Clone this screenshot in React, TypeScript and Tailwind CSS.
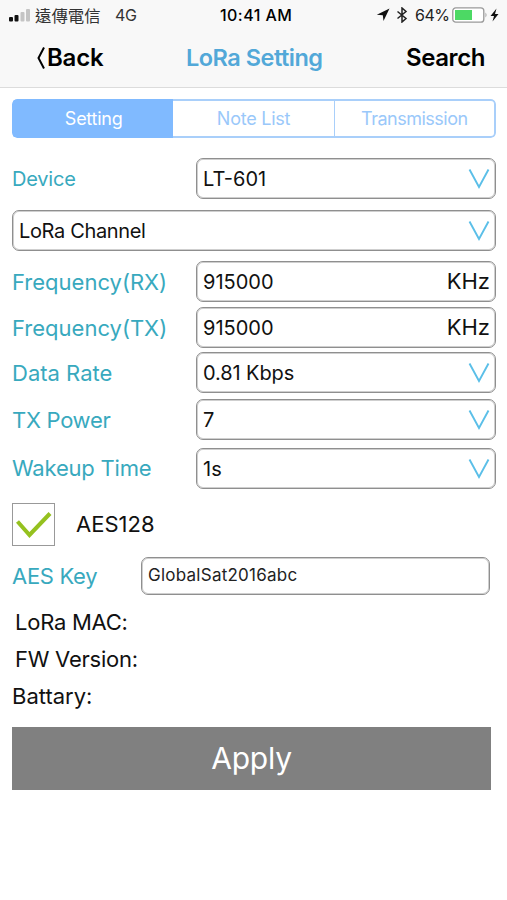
import React, { useState } from 'react';
import clsx from 'clsx';

const TABS = [
  { name: 'Setting', tracking: 'tracking-[-0.25px]' },
  { name: 'Note List', tracking: 'tracking-[-0.25px]' },
  { name: 'Transmission', tracking: 'tracking-[-0.5px]' },
];

function StatusBar() {
  return (
    <div className="flex items-center h-[30px] text-black">
      <svg width="24" height="14" viewBox="0 0 24 14" className="ml-2 shrink-0">
        <rect x="1" y="9" width="4" height="4.5" rx="1" fill="#111" />
        <rect x="6.5" y="7" width="4" height="6.5" rx="1" fill="#111" />
        <rect x="12.5" y="4" width="4" height="9.5" rx="1" fill="#c4c4c4" />
        <rect x="18" y="1" width="4" height="12.5" rx="1" fill="#c4c4c4" />
      </svg>
      <span className="ml-[3px] w-[80px] text-[16.4px] leading-[30px] font-['Noto_Sans_CJK_TC',sans-serif] text-[#333] whitespace-nowrap">遠傳電信</span>
      <span className="w-[105px] text-[16px] tracking-[-0.3px] text-[#333]">4G</span>
      <span className="w-[156px] text-[16px] font-medium tracking-[0.45px] whitespace-nowrap">10:41 AM</span>
      <svg width="14" height="14" viewBox="0 0 14 14" className="shrink-0">
        <path d="M13.5 0.5L0.8 6.8L6.8 7.2L7.5 13Z" fill="#111" />
      </svg>
      <svg width="12" height="16" viewBox="0 0 12 16" className="ml-[6px] shrink-0" fill="none" stroke="#222" strokeWidth="1.5">
        <path d="M1.5 4.5L10 11.5L6 15V1L10 4.5L1.5 11.5" />
      </svg>
      <span className="ml-[7px] w-[37px] text-[16px] tracking-[-0.5px] text-[#222]">64%</span>
      <svg width="50" height="16" viewBox="0 0 50 16" className="shrink-0">
        <rect x="0.8" y="0.8" width="31" height="14.4" rx="3" fill="#fff" stroke="#999" strokeWidth="1.3" />
        <rect x="3" y="3" width="17" height="10" fill="#4cd964" />
        <path d="M33.5 5.5Q35.5 8 33.5 10.5Z" fill="#999" />
        <path d="M44.5 1.5L38.5 9H42L40.5 14.5L46.5 7H43Z" fill="#111" />
      </svg>
    </div>
  );
}

function Field({ value, unit, arrow, className }: { value: string; unit?: string; arrow?: boolean; className?: string }) {
  return (
    <div className={clsx('flex items-center justify-between border border-[#8f8f8f] rounded-[7px] shadow-[inset_0_0_0_1px_#cfcfcf] text-[#111]', className)}>
      <span className="text-[20px] whitespace-nowrap">{value}</span>
      {unit && <span className="text-[22px]">{unit}</span>}
      {arrow && (
        <svg width="22" height="21" viewBox="0 0 22 21" fill="none" stroke="#5bbfe8" strokeWidth="1.9" className="shrink-0">
          <path d="M1.5 1.5L11 19L20.5 1.5" />
        </svg>
      )}
    </div>
  );
}

function Row({ label, labelClass = 'text-[22px]', children, className }: { label: string; labelClass?: string; children: React.ReactNode; className?: string }) {
  return (
    <div className={clsx('flex items-center h-[41px]', className)}>
      <span className={clsx('w-[184px] shrink-0 text-[#38a9be] whitespace-nowrap', labelClass)}>{label}</span>
      {children}
    </div>
  );
}

const box = 'w-[300px] h-[41px] pl-[6px] pr-[5px]';

export default function App() {
  const [tab, setTab] = useState(0);
  const [aes, setAes] = useState(true);

  return (
    <div className="w-[507px] h-[900px] overflow-hidden bg-white font-['Inter',sans-serif]">
      <header className="h-[88px] bg-[#f8f8f8] border-b border-[#dcdcdc]">
        <StatusBar />
        <nav className="flex items-center h-[55px] text-[24px] font-semibold">
          <button className="flex items-center w-[186px] pl-[36px] text-black">
            <svg width="11" height="24" viewBox="0 0 11 24" fill="none" stroke="#000" strokeWidth="2">
              <path d="M8 1.5L2.5 12L8 22.5" />
            </svg>
            <span className="tracking-[-0.2px]">Back</span>
          </button>
          <h1 className="w-[220px] text-[23.5px] tracking-[-0.5px] text-[#52a8d8] whitespace-nowrap">LoRa Setting</h1>
          <button className="tracking-[-0.4px] text-black">Search</button>
        </nav>
      </header>

      <main className="pt-[11px] pl-3">
        <div className="grid grid-cols-3 w-[484px] h-[39px] rounded-[5px] overflow-hidden">
          {TABS.map((t, i) => (
            <button
              key={t.name}
              onClick={() => setTab(i)}
              className={clsx(
                'border-y-2 text-[18px]',
                t.tracking,
                i === 0 && 'rounded-l-[5px] border-l-2',
                i === 1 && 'border-r',
                i === 2 && 'rounded-r-[5px] border-r-2',
                tab === i ? 'bg-[#80baff] border-[#80baff] text-white' : 'border-[#a9cffa] text-[#9ac8fa]'
              )}
            >
              {t.name}
            </button>
          ))}
        </div>

        <Row label="Device" labelClass="text-[20px] tracking-[-0.2px] pt-px" className="mt-[20px]">
          <Field value="LT-601" arrow className={box} />
        </Row>
        <Field value="LoRa Channel" arrow className="mt-[11px] w-[484px] h-[41px] pl-[6px] pr-[5px] tracking-[-0.35px]" />
        <Row label="Frequency(RX)" labelClass="text-[22px] pt-px" className="mt-[10px]">
          <Field value="915000" unit="KHz" className={box} />
        </Row>
        <Row label="Frequency(TX)" labelClass="text-[22px] pt-px" className="mt-[5px]">
          <Field value="915000" unit="KHz" className={box} />
        </Row>
        <Row label="Data Rate" labelClass="text-[22px] pt-px" className="mt-[4px]">
          <Field value="0.81 Kbps" arrow className={clsx(box, 'tracking-[-0.1px]')} />
        </Row>
        <Row label="TX Power" labelClass="text-[22px] tracking-[-0.3px] pt-px" className="mt-[6px]">
          <Field value="7" arrow className={box} />
        </Row>
        <Row label="Wakeup Time" labelClass="text-[22px] tracking-[-0.2px]" className="mt-[8px]">
          <Field value="1s" arrow className={box} />
        </Row>

        <div className="flex items-center h-[43px] mt-[14px]">
          <button onClick={() => setAes(!aes)} className="w-[43px] h-[43px] border border-[#999] flex items-center justify-center">
            {aes && (
              <svg width="37" height="28" viewBox="0 0 37 28" fill="none" stroke="#95c11f" strokeWidth="4" className="shrink-0">
                <path d="M2.5 10.5L14.5 24L35 2.5" />
              </svg>
            )}
          </button>
          <span className="ml-[21px] text-[22px] text-[#111]">AES128</span>
        </div>

        <div className="flex items-center h-[38px] mt-[11px]">
          <span className="w-[129px] text-[22px] tracking-[-0.3px] text-[#38a9be]">AES Key</span>
          <div className="flex items-center w-[349px] h-[38px] pl-[6px] border border-[#8f8f8f] rounded-[7px] shadow-[inset_0_0_0_1px_#cfcfcf] text-[17px] tracking-[0.25px] text-[#222]">GlobalSat2016abc</div>
        </div>

        <div className="mt-[9px] text-[22px] leading-[37px] text-[#111]">
          <p className="pl-[3px] tracking-[-0.25px]">LoRa MAC:</p>
          <p className="pl-[3px] tracking-[-0.25px]">FW Version:</p>
          <p>Battary:</p>
        </div>

        <button className="mt-[12px] w-[479px] h-[63px] bg-[#808080] text-white text-[30px] tracking-[-0.2px]">Apply</button>
      </main>
    </div>
  );
}
